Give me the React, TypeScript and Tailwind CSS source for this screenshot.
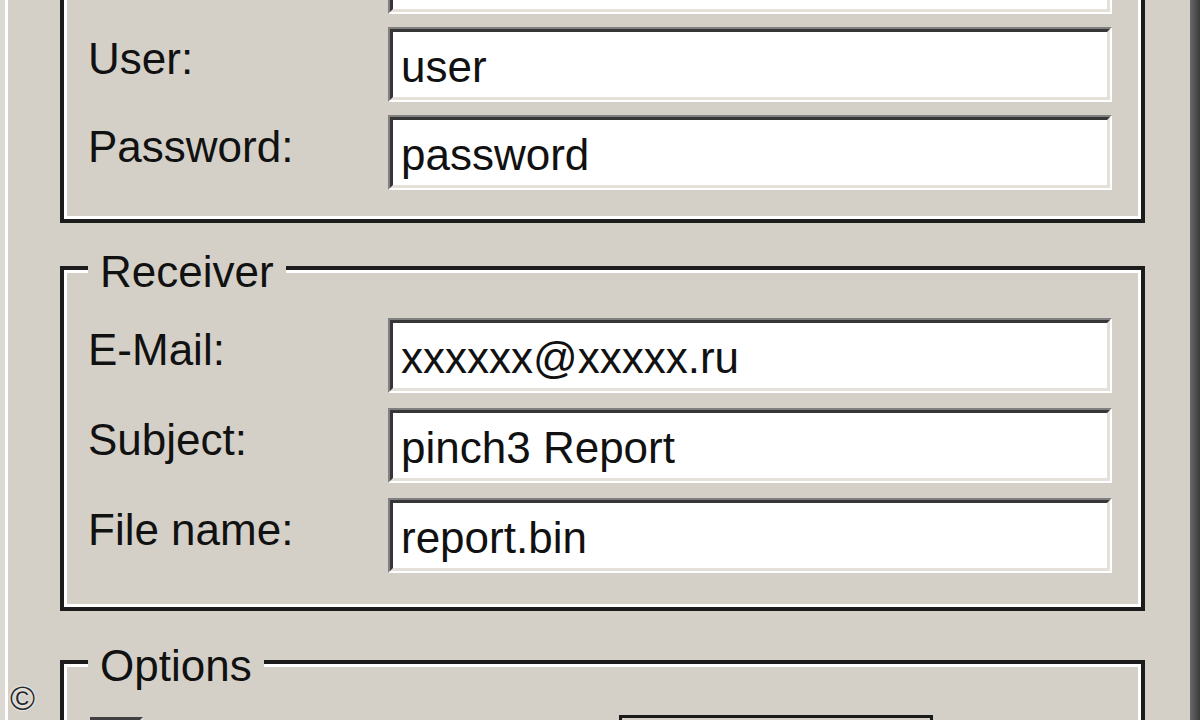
import React from 'react';

type Field = { label: string; value: string };

// first row of the server box sits above the visible area
const serverFields: Field[] = [
  { label: '', value: '' },
  { label: 'User:', value: 'user' },
  { label: 'Password:', value: 'password' },
];

const receiverFields: Field[] = [
  { label: 'E-Mail:', value: 'xxxxxx@xxxxx.ru' },
  { label: 'Subject:', value: 'pinch3 Report' },
  { label: 'File name:', value: 'report.bin' },
];

function TextBox({ value }: { value: string }) {
  return (
    <div className="h-[75px] w-[724px] shrink-0 border-2 border-t-[#808080] border-l-[#808080] border-b-white border-r-white">
      <div className="h-full border-[3px] border-t-[#363636] border-l-[#363636] border-b-[#e4e1db] border-r-[#e4e1db] bg-white pl-[8px] pt-[13px] whitespace-nowrap">
        {value}
      </div>
    </div>
  );
}

function FieldRow({ field }: { field: Field }) {
  return (
    <div className="flex items-start">
      <div className="w-[300px] shrink-0 pt-[10px] whitespace-nowrap">{field.label}</div>
      <TextBox value={field.value} />
    </div>
  );
}

function GroupBox({
  legend,
  className,
  children,
}: {
  legend?: string;
  className?: string;
  children: React.ReactNode;
}) {
  return (
    <div className={`relative border-4 border-[#1c1c1c] ${className ?? ''}`}>
      <div className="border-[3px] border-white">{children}</div>
      {legend && (
        <span className="absolute left-[24px] top-[-20px] bg-[#d4d0c8] px-3 whitespace-nowrap">{legend}</span>
      )}
    </div>
  );
}

export default function App() {
  return (
    <div className="relative flex h-[720px] w-[1200px] overflow-hidden bg-[#d4d0c8] font-['Liberation_Sans',Arial,sans-serif] text-[44px] leading-[44px] text-[#111]">
      <div className="w-[5px] shrink-0 bg-[#dcd9d2]" />
      <div className="w-[3px] shrink-0 bg-white" />
      <div className="w-[52px] shrink-0" />

      <div className="mt-[-113px] flex w-[1085px] shrink-0 flex-col self-start">
        {/* Server */}
        <GroupBox>
          <div className="flex flex-col gap-[13px] pl-[21px] pr-[26px] pt-[45px] pb-[26px]">
            {serverFields.map((f, i) => (
              <FieldRow key={i} field={f} />
            ))}
          </div>
        </GroupBox>

        {/* Receiver */}
        <GroupBox legend="Receiver" className="mt-[43px]">
          <div className="flex flex-col gap-[15px] pl-[21px] pr-[26px] pt-[45px] pb-[31px]">
            {receiverFields.map((f) => (
              <FieldRow key={f.label} field={f} />
            ))}
          </div>
        </GroupBox>

        {/* Options */}
        <GroupBox legend="Options" className="mt-[49px]">
          <div className="flex items-start pl-[21px] pr-[26px] pt-[48px] pb-[30px]">
            <div className="ml-[2px] mt-[2px] h-[53px] w-[53px] shrink-0 border-[3px] border-t-[#404040] border-l-[#404040] border-b-[#e4e1db] border-r-[#e4e1db] bg-white" />
            <div className="ml-[476px] h-[60px] w-[314px] shrink-0 border-[3px] border-[#1a1a1a] bg-[#d4d0c8]" />
          </div>
        </GroupBox>
      </div>

      <div className="w-[45px] shrink-0" />
      <div className="w-[10px] shrink-0 bg-gradient-to-r from-[#6a6a6a] to-[#3a3a3a]" />

      <span className="absolute left-[10px] top-[681px] text-[34px] leading-[34px] text-[#2a2a2a] [text-shadow:0_0_2px_#fff,0_0_2px_#fff]">
        ©
      </span>
    </div>
  );
}
